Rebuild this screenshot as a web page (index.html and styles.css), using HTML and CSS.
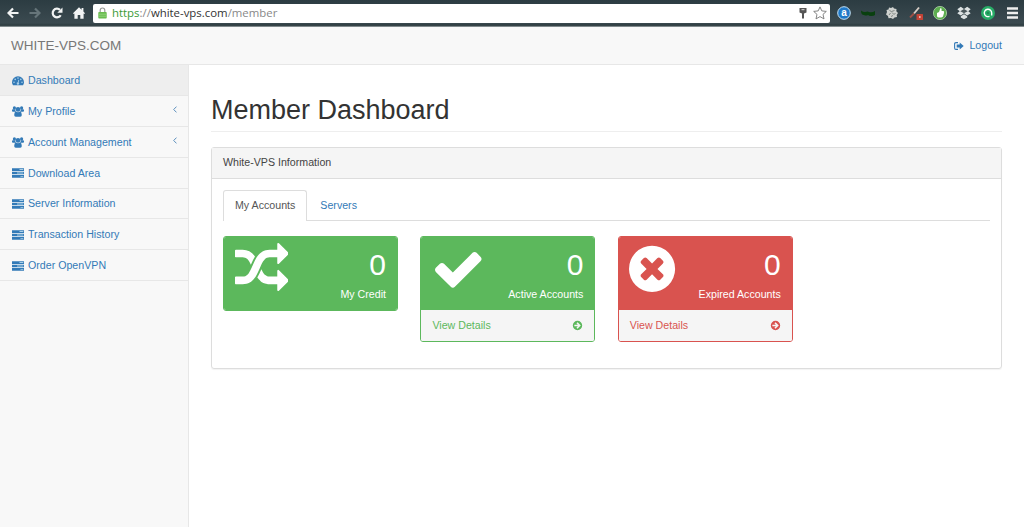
FILE: index.html
```
<!DOCTYPE html>
<html lang="en">
<head>
<meta charset="utf-8">
<title>White-VPS Member Dashboard</title>
<link rel="stylesheet" href="styles.css">
</head>
<body>
<svg class="defs" aria-hidden="true">
  <symbol id="users" viewBox="0 0 12 11"><circle cx="2.4" cy="1.900" r="1.600"/><circle cx="9.600" cy="1.900" r="1.600"/><circle cx="6" cy="3.400" r="2.300"/><path d="M0 5V4.300Q0 3.300.9 3.300H3.200Q3.200 4.800 4.200 5.800H1Q0 5.800 0 5zM12 5V4.300Q12 3.300 11.100 3.300H8.800Q8.800 4.800 7.800 5.800H11Q12 5.800 12 5zM2.200 9Q2.200 6 4 5.600Q6 6.700 8 5.600Q9.800 6 9.800 9Q9.800 10.700 8.300 10.700H3.700Q2.200 10.700 2.200 9z"/></symbol>
  <symbol id="tasks" viewBox="0 0 12 10"><path d="M0 .3h12v2.600H0zM0 3.700h12v2.600H0zM0 7.100h12v2.600H0z"/><path class="pale" d="M7.500 1.100h3.800v.9H7.500zM5 4.500h6.300v.9H5zM8.500 7.900h2.800v.9H8.500z"/></symbol>
  <symbol id="go" viewBox="0 0 1792 1792"><path fill-rule="evenodd" d="M1413 896q0-27-18-45l-362-362-91-91q-18-18-45-18t-45 18l-91 91q-18 18-18 45t18 45l189 189h-502q-26 0-45 19t-19 45v128q0 26 19 45t45 19h502l-189 189q-19 19-19 45t19 45l91 91q18 18 45 18t45-18l362-362 91-91q18-18 18-45zM1664 896a768 768 0 1 0-1536 0a768 768 0 1 0 1536 0z"/></symbol>
</svg>

<header class="browser">
  <div class="controls">
    <svg class="ctl back" viewBox="0 0 12 12"><path d="M11.500 6H2M6 1.500L1.500 6L6 10.500"/></svg>
    <svg class="ctl forward" viewBox="0 0 12 12"><path d="M.5 6H10M6 1.500L10.500 6L6 10.500"/></svg>
    <svg class="ctl reload" viewBox="0 0 12 12"><path d="M9.700 8.200A4.300 4.300 0 1 1 9 2.900"/><path class="solid" d="M11.500.5v5.200H6.300z"/></svg>
    <svg class="ctl home" viewBox="0 0 12 12"><path class="solid" d="M6 .2L8.600 2.800V1h1.800v3.600L12 6.200l-.7.9-.7-.6V11.800H7.300V8H4.700v3.800H1.400V6.500l-.7.6L0 6.200z"/></svg>
  </div>
  <div class="address">
    <svg class="lock" viewBox="0 0 9 12"><path d="M2.200 6V3.300a2.300 2.300 0 0 1 4.600 0V6" fill="none" stroke="#999c98" stroke-width="1.200"/><rect x=".3" y="5" width="8.400" height="6.500" rx=".8" fill="#6abb50"/><path d="M.8 7.200h7.400M.8 9.200h7.400" stroke="#98d984" stroke-width=".8"/></svg>
    <span class="url"><span class="scheme">https</span>://<span class="host">white-vps.com</span>/member</span>
    <svg class="key" viewBox="0 0 8 11"><path d="M.5 0h7v4.500L5 5.500V10.500H3V5.500L.5 4.500z" fill="#555"/><path d="M2.500 1.700h3" stroke="#ddd"/></svg>
    <svg class="star" viewBox="0 0 14 14"><path d="M7 .9l1.800 4 4.500.5-3.300 3 1 4.500L7 10.600l-4 2.300 1-4.500-3.300-3 4.500-.5z" fill="#fff" stroke="#777" stroke-width=".9"/></svg>
  </div>
  <div class="extensions">
    <svg viewBox="0 0 14 14"><circle cx="7" cy="7" r="6.300" fill="#2079c8" stroke="#c4e1f4"/><text class="badge" x="7" y="10.300">a</text></svg>
    <svg viewBox="0 0 14 14"><path d="M0 4.500q2 1.500 4 1.500 3-1 4 0 3 1 6-1v4q-1 1-4 1-2 0-3-1-2 1-4 0Q0 9 0 4.500z" fill="#09400f"/></svg>
    <svg viewBox="0 0 14 14"><path d="M4 1.500l2 .5 2-1 1 1.500 2.500.5-.2 2.200L13 7l-1.300 2 .3 2-2.500.5L8 13l-2-1-2.500.3L3 10 1 8.500 2 6 1.500 4l2-.5z" fill="#cfd2cf"/><path d="M4.500 4.500l2 1 3-1M4 9l1.500-2M7 6.500l2 2 1.500-1.500M6 10.500l2-1" fill="none" stroke="#68716f" stroke-width=".8"/></svg>
    <svg viewBox="0 0 14 14"><path d="M5 7.500L10 1.500" stroke="#d9cfc7" stroke-width="1.900"/><path d="M1 11.500L5 7.500" stroke="#9d5047" stroke-width="1.800"/><rect x="7.500" y="8" width="6.500" height="6" rx=".5" fill="#c44336"/><path d="M10 10.200h1.600v1.600H10z" fill="#f5dcd7"/></svg>
    <svg viewBox="0 0 14 14"><circle cx="7" cy="7" r="6.600" fill="#5cad50" stroke="#afd7a7" stroke-width=".8"/><path d="M4 7l2-1 1.500-4q1.500 0 1 3h2q1 .5.500 2L10 10.500q-1 1-2 1H5.500Q4 11 4 10z" fill="#fff"/></svg>
    <svg viewBox="0 0 14 14"><path d="M3.800.8L7 3l3.200-2.200L13.700 3.200 11.300 5.200l2.400 2L10.200 9.500 7 7.300 3.800 9.500.3 7.200l2.400-2L.3 3.200zM3.800 10.200L7 8.200l3.200 2v1.200L7 13.300l-3.200-1.900z" fill="#dce2e3"/><path d="M7 3l3.700 2.200L7 7.300 3.300 5.200z" fill="#4b585c"/></svg>
    <svg viewBox="0 0 14 14"><circle cx="7" cy="7" r="7" fill="#28ac67"/><path d="M8.500 10.300A3.700 3.700 0 1 1 10.700 7v2.500" fill="none" stroke="#fff" stroke-width="1.400"/><circle cx="7" cy="7" r="1.300" fill="#1d8e53"/></svg>
    <svg class="menu" viewBox="0 0 11 12"><path d="M0 1.500h11M0 6h11M0 10.500h11" stroke="#eee" stroke-width="2.700"/></svg>
  </div>
</header>

<nav class="navbar">
  <a class="brand">WHITE-VPS.COM</a>
  <a class="logout"><svg viewBox="0 0 10 8"><path d="M4 .6H2Q.6.6.6 2v4Q.6 7.400 2 7.400h2" fill="none" stroke="currentColor" stroke-width="1.100"/><path d="M5.700.4L9.700 4 5.700 7.600V5.400H2.700V2.600h3z"/></svg><span>Logout</span></a>
</nav>

<div class="layout">
  <aside class="sidebar">
    <a class="item active"><svg class="icon" viewBox="0 0 12 10"><path d="M1 9.300Q0 7.800 0 6.200a6 6 0 0 1 12 0q0 1.600-1 3.100z"/><g class="pale"><circle cx="2" cy="6.300" r=".8"/><circle cx="3.200" cy="3.400" r=".8"/><circle cx="6" cy="2.100" r=".8"/><circle cx="8.800" cy="3.400" r=".8"/><circle cx="10" cy="6.300" r=".8"/><path d="M6.400 3.700l.8.200-.6 2.600a1.200 1.200 0 1 1-.8-.2z"/></g></svg><span>Dashboard</span></a>
    <a class="item"><svg class="icon people"><use href="#users"/></svg><span>My Profile</span><svg class="caret" viewBox="0 0 4 7"><path d="M3.500.6L.7 3.500l2.800 2.900"/></svg></a>
    <a class="item"><svg class="icon people"><use href="#users"/></svg><span>Account Management</span><svg class="caret" viewBox="0 0 4 7"><path d="M3.500.6L.7 3.500l2.800 2.900"/></svg></a>
    <a class="item"><svg class="icon"><use href="#tasks"/></svg><span>Download Area</span></a>
    <a class="item"><svg class="icon"><use href="#tasks"/></svg><span>Server Information</span></a>
    <a class="item"><svg class="icon"><use href="#tasks"/></svg><span>Transaction History</span></a>
    <a class="item"><svg class="icon"><use href="#tasks"/></svg><span>Order OpenVPN</span></a>
  </aside>

  <main class="content">
    <h1>Member Dashboard</h1>
    <section class="panel">
      <div class="panel-heading">White-VPS Information</div>
      <div class="panel-body">
        <div class="tabs"><a class="tab current">My Accounts</a><a class="tab">Servers</a></div>
        <div class="cards">
          <article class="card green">
            <div class="card-top">
              <svg class="big" viewBox="0 0 1792 1792"><path d="M666 481q-60 92-137 273-22-45-37-72.5t-40.5-63.5-51-56.5-63-35-81.5-14.500h-224q-14 0-23-9t-9-23v-192q0-14 9-23t23-9h224q250 0 410 225zm1126 799q0 14-9 23l-320 320q-9 9-23 9-13 0-22.500-9.500t-9.500-22.500v-192q-32 0-85 .5t-81 1-73-1-71-5-64-10.500-63-18.500-58-28.500-59-40-55-53.500-56-69.500q59-93 136-273 22 45 37 72.500t40.500 63.500 51 56.500 63 35 81.500 14.500h256v-192q0-14 9-23t23-9q12 0 24 10l319 319q9 9 9 23zm0-896q0 14-9 23l-320 320q-9 9-23 9-13 0-22.500-9.500t-9.500-22.500v-192h-256q-48 0-87 15t-69 45-51 61.500-45 77.500q-32 62-78 171-29 66-49.500 111t-54 105-64 100-74 83-90 68.500-106.500 42-128 16.500h-224q-14 0-23-9t-9-23v-192q0-14 9-23t23-9h224q48 0 87-15t69-45 51-61.500 45-77.500q32-62 78-171 29-66 49.500-111t54-105 64-100 74-83 90-68.500 106.500-42 128-16.500h256v-192q0-14 9-23t23-9q12 0 24 10l319 319q9 9 9 23z"/></svg>
              <div class="figures"><div class="number">0</div><div class="label">My Credit</div></div>
            </div>
          </article>
          <article class="card green">
            <div class="card-top">
              <svg class="big check" viewBox="121 0 1792 1792"><path d="M1671 566q0 40-28 68l-724 724-136 136q-28 28-68 28t-68-28l-136-136-362-362q-28-28-28-68t28-68l136-136q28-28 68-28t68 28l294 295 656-657q28-28 68-28t68 28l136 136q28 28 28 68z"/></svg>
              <div class="figures"><div class="number">0</div><div class="label">Active Accounts</div></div>
            </div>
            <a class="card-foot"><span>View Details</span><svg><use href="#go"/></svg></a>
          </article>
          <article class="card red">
            <div class="card-top">
              <svg class="big" viewBox="128 0 1792 1792"><path fill-rule="evenodd" d="M1277 1122q0-26-19-45l-181-181 181-181q19-19 19-45 0-27-19-46l-90-90q-19-18-46-18-26 0-45 18l-181 181-181-181q-19-18-45-18-27 0-46 18l-90 90q-19 19-19 46 0 26 19 45l181 181-181 181q-19 19-19 45 0 27 19 46l90 90q19 18 46 18 26 0 45-18l181-181 181 181q19 18 45 18 27 0 46-18l90-90q19-19 19-46zM1664 896a768 768 0 1 0-1536 0a768 768 0 1 0 1536 0z"/></svg>
              <div class="figures"><div class="number">0</div><div class="label">Expired Accounts</div></div>
            </div>
            <a class="card-foot"><span>View Details</span><svg><use href="#go"/></svg></a>
          </article>
        </div>
      </div>
    </section>
  </main>
</div>
</body>
</html>
```
FILE: styles.css
```
* { box-sizing: border-box; }
body {
  margin: 0;
  height: 527px;
  overflow: hidden;
  display: flex;
  flex-direction: column;
  background: #fff;
  color: #444;
  font: 10.650px/15px "Liberation Sans", Arial, sans-serif;
}
svg { display: block; flex: none; fill: currentColor; }
.defs { position: absolute; width: 0; height: 0; }
.pale { fill: #a9cfe8; }

.browser {
  height: 27px;
  flex: none;
  display: flex;
  align-items: center;
  padding-bottom: 1px;
  background: linear-gradient(#2c3c42, #3b4a50 85%, #2d3c40 94%, #a5acae);
}
.controls { width: 93px; display: flex; gap: 10px; padding-left: 7px; }
.ctl { width: 12px; height: 12px; color: #f2f4f4; }
.ctl path { fill: none; stroke: currentColor; stroke-width: 2.200; }
.ctl .solid { fill: currentColor; stroke: none; }
.forward { color: #66757a; }
.address {
  width: 737px;
  height: 19px;
  background: #fff;
  border-radius: 2px;
  display: flex;
  align-items: center;
  padding: 0 3px 0 5px;
}
.lock { width: 9px; height: 12px; }
.url { flex: 1; padding-left: 5px; color: #888; font: 11.400px/18px "Open Sans", sans-serif; }
.scheme { color: #3a9b35; }
.host { color: #333; }
.key { width: 8px; height: 11px; margin-right: 6px; }
.star { width: 14px; height: 14px; }
.extensions { display: flex; align-items: center; gap: 10px; padding-left: 7px; }
.extensions svg { width: 14px; height: 14px; }
.extensions .menu { width: 11px; height: 12px; margin-left: 2px; }
.badge { fill: #fff; font: bold 10px "Liberation Sans", sans-serif; text-anchor: middle; }

.navbar {
  height: 38px;
  flex: none;
  display: flex;
  align-items: center;
  justify-content: space-between;
  padding: 0 22px 0 11px;
  background: #f8f8f8;
  border-bottom: 1px solid #e7e7e7;
}
.brand { font-size: 13.500px; color: #777; }
.logout { display: flex; align-items: center; gap: 5px; color: #337ab7; }
.logout svg { width: 10px; height: 8px; }

.layout { flex: 1; display: flex; }
.sidebar { width: 189px; background: #f8f8f8; border-right: 1px solid #e7e7e7; }
.item {
  height: 30.780px;
  display: flex;
  align-items: center;
  padding: 1px 12px 0;
  border-bottom: 1px solid #e7e7e7;
  color: #337ab7;
}
.item.active { height: 31.300px; background: #eee; }
.icon { width: 12px; height: 10px; margin-right: 4px; }
.people { height: 11px; }
.caret { width: 4px; height: 7px; margin: 0 -1px 4px auto; }
.caret path { fill: none; stroke: #5c8fbd; }

.content { flex: 1; padding: 26px 22px 0; }
h1 {
  margin: 0 0 15px;
  height: 41px;
  border-bottom: 1px solid #eee;
  color: #333;
  font-size: 27px;
  font-weight: 400;
  line-height: 38px;
}
.panel { height: 222px; border: 1px solid #ddd; border-radius: 3px; box-shadow: 0 1px 1px rgba(0,0,0,.05); }
.panel-heading { height: 31px; padding: 0 11px; line-height: 29px; background: #f5f5f5; border-bottom: 1px solid #ddd; }
.panel-body { padding: 11px; }
.tabs { height: 31px; display: flex; border-bottom: 1px solid #ddd; }
.tab { height: 30px; padding: 0 12px; line-height: 29px; color: #337ab7; border: 1px solid transparent; }
.tab.current { height: 31px; padding: 0 11px; background: #fff; color: #555; border-color: #ddd; border-bottom: 0; border-radius: 3px 3px 0 0; }
.cards { display: grid; grid-template-columns: repeat(3, 175px); column-gap: 22.400px; align-items: start; padding-top: 15px; }
.card { border: 1px solid var(--tone); border-radius: 3px; color: var(--tone); overflow: hidden; }
.green { --tone: #5cb85c; }
.red { --tone: #d9534f; }
.card-top { height: 73px; display: flex; padding: 5px 11px 5px 10.500px; background: var(--tone); color: #fff; }
.big { width: 53.800px; height: 53.800px; }
.check { margin-left: 3px; }
.figures { flex: 1; text-align: right; margin-left: -10px; padding-top: 8px; }
.number { font-size: 30px; line-height: 30px; }
.label { line-height: 15px; margin-top: 7px; }
.card-foot { height: 31px; display: flex; align-items: center; justify-content: space-between; padding: 0 11px; background: #f5f5f5; }
.card-foot svg { width: 11px; height: 11px; }
```
